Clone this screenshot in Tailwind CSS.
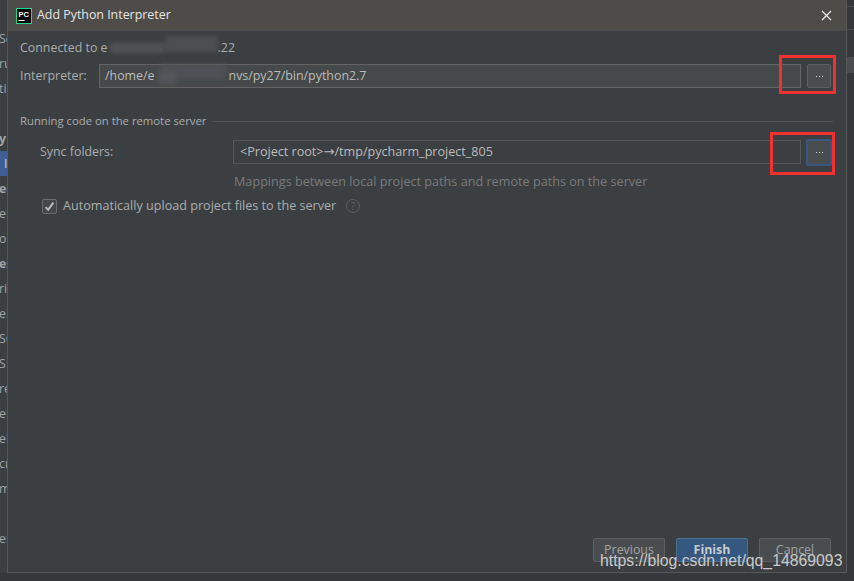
<!DOCTYPE html>
<html lang="en">
<head>
  <meta charset="UTF-8" />
  <title>Add Python Interpreter</title>
  <script src="https://cdn.jsdelivr.net/npm/@tailwindcss/browser@4"></script>
</head>
<body class="bg-[#35383a] h-[581px] w-[854px] overflow-hidden relative font-['Open_Sans',sans-serif] text-[12.4px] text-[#a9adaf]">
  <div class="flex h-[573px]">
    <!-- settings tree showing behind the dialog -->
    <div class="w-[7px] shrink-0 overflow-hidden bg-[#3c3f41]">
      <div class="-ml-[1px] text-[#a0a3a5] leading-[25px] pt-[26px] whitespace-nowrap flex flex-col items-start">
        <span>Sc</span><span>ru</span><span>ti</span><span class="h-[25px]"></span><span class="font-bold">y</span>
        <span class="bg-[#3f5f92] w-[12px] h-[25px] shrink-0 pl-[5px] text-[#c5cfe0]">I</span>
        <span class="font-bold">ec</span><span>e</span><span>o</span><span class="font-bold">es</span><span>ri</span><span>e</span><span>SC</span><span>S</span><span>re</span><span>e</span><span>el</span><span>cr</span><span>m</span><span class="h-[25px]"></span><span>er</span>
      </div>
    </div>

    <div class="w-[840px] shrink-0 flex flex-col bg-[#3c3f41] border-l border-r border-b border-[#555758]">
      <!-- title bar -->
      <div class="h-[31px] shrink-0 bg-[#4e4c49] flex items-center pl-[8px] pr-[14px]">
        <svg width="16" height="16" viewBox="0 0 16 16" class="shrink-0">
          <rect x="0.5" y="0.5" width="15" height="15" fill="#000" stroke="#21d789"/>
          <text x="2.5" y="8.5" font-size="7.5" font-weight="700" fill="#fff" font-family="Liberation Sans">PC</text>
          <rect x="2.5" y="12" width="6" height="1" fill="#fff"/>
        </svg>
        <span class="ml-[5px] text-[#e4e4e4]">Add Python Interpreter</span>
        <svg width="11" height="11" viewBox="0 0 11 11" class="ml-auto" stroke="#f0f0f0" stroke-width="1.2"><path d="M1 1l9 9M10 1l-9 9"/></svg>
      </div>

      <div class="flex-1 flex flex-col pl-[12px] pr-[13px] relative">
        <div class="mt-[8px] h-[18px] leading-[18px]">Connected to e<span class="inline-block w-[110px]"></span>.22</div>

        <div class="mt-[7px] flex items-center h-[24px]">
          <label class="w-[79px]">Interpreter:</label>
          <div class="w-[702px] h-[24px] bg-[#45494a] border border-[#646464] pl-[5px] leading-[21px] text-[#bbbbbb]">/home/e<span class="inline-block w-[74px]"></span>nvs/py27/bin/python2.7</div>
          <button class="ml-[6px] w-[24px] h-[24px] bg-[#4a4d4f] border border-[#5e6060] rounded-[2px] flex items-center justify-center gap-[2px]">
            <span class="w-px h-px bg-[#d0d0d0]"></span><span class="w-px h-px bg-[#d0d0d0]"></span><span class="w-px h-px bg-[#d0d0d0]"></span>
          </button>
        </div>

        <div class="mt-[24px] flex items-center h-[18px]">
          <span class="text-[11.3px]">Running code on the remote server</span>
          <div class="ml-[6px] flex-1 h-px bg-[#515354]"></div>
        </div>

        <div class="mt-[10px] flex items-center h-[24px] pl-[20px]">
          <label class="w-[193px]">Sync folders:</label>
          <div class="w-[568px] h-[24px] border border-[#555758] pl-[6px] leading-[21px] text-[12.6px] text-[#bbbbbb]">&lt;Project root&gt;<span class="font-['DejaVu_Sans',sans-serif] text-[13px]">→</span>/tmp/pycharm_project_805</div>
          <button class="ml-[5px] w-[26px] h-[27px] shrink-0 bg-[#4a4d4f] border-2 border-[#365880] rounded-[2px] flex items-center justify-center gap-[2px]">
            <span class="w-px h-px bg-[#d0d0d0]"></span><span class="w-px h-px bg-[#d0d0d0]"></span><span class="w-px h-px bg-[#d0d0d0]"></span>
          </button>
        </div>

        <div class="mt-[8px] pl-[214px] h-[18px] leading-[18px] text-[12.65px] text-[#787a7c]">Mappings between local project paths and remote paths on the server</div>

        <div class="mt-[7px] pl-[22px] flex items-center h-[18px]">
          <span class="w-[15px] h-[15px] bg-[#43494a] border border-[#6b6b6b] rounded-[2px] flex items-center justify-center">
            <svg width="11" height="11" viewBox="0 0 10 10" fill="none" stroke="#bdbdbd" stroke-width="1.8"><path d="M1.5 5.5l2.3 2.5L8.5 1.5"/></svg>
          </span>
          <span class="ml-[6px] text-[12.6px]">Automatically upload project files to the server</span>
          <span class="ml-[10px] w-[14px] h-[14px] rounded-full border border-[#5c5f60] text-[#5f6263] text-[10px] leading-[12px] text-center">?</span>
        </div>

        <div class="mt-auto mb-[10px] flex justify-end gap-[11px] pr-[2px]">
          <button class="w-[72px] h-[24px] bg-[#4a4d4f] border border-[#5e6060] rounded-[2px] text-[#a0a3a5]">Previous</button>
          <button class="w-[72px] h-[24px] bg-[#365880] border border-[#4c708c] rounded-[2px] text-[#c8ccd0] font-bold">Finish</button>
          <button class="w-[72px] h-[24px] bg-[#4a4d4f] border border-[#5e6060] rounded-[2px] text-[#a0a3a5]">Cancel</button>
        </div>
      </div>
    </div>

    <!-- window behind the dialog, right edge -->
    <div class="flex-1 bg-[#35383a] flex flex-col pt-[6px]">
      <div class="h-px bg-[#4a4c4d]"></div>
      <div class="mt-[22px] h-px bg-[#4a4c4d]"></div>
      <div class="mt-[27px] h-[16px] bg-[#4a4c4d]"></div>
    </div>
  </div>

  <!-- annotations pasted on top of the screenshot -->
  <div class="absolute left-[779px] top-[55px] w-[57px] h-[39px] border-[3px] border-[#f23030]"></div>
  <div class="absolute left-[770px] top-[132px] w-[65px] h-[43px] border-[3px] border-[#f23030]"></div>
  <div class="absolute left-[600px] top-[551px] font-['Liberation_Sans',sans-serif] text-[15.8px] leading-[20px] text-[#c9c9c9]">https://blog.csdn.net/qq_14869093</div>

  <!-- blurred out host name -->
  <div class="absolute left-[110px] top-[43px] w-[55px] h-[10px] bg-[#55585a]/80 blur-[2px]"></div>
  <div class="absolute left-[165px] top-[36px] w-[53px] h-[16px] bg-[#505356]/80 blur-[2px]"></div>
  <div class="absolute left-[160px] top-[63px] w-[66px] h-[16px] bg-[#52565a]/70 blur-[2px]"></div>
  <div class="absolute left-[158px] top-[72px] w-[18px] h-[13px] bg-[#55595c]/70 blur-[2px]"></div>
</body>
</html>
